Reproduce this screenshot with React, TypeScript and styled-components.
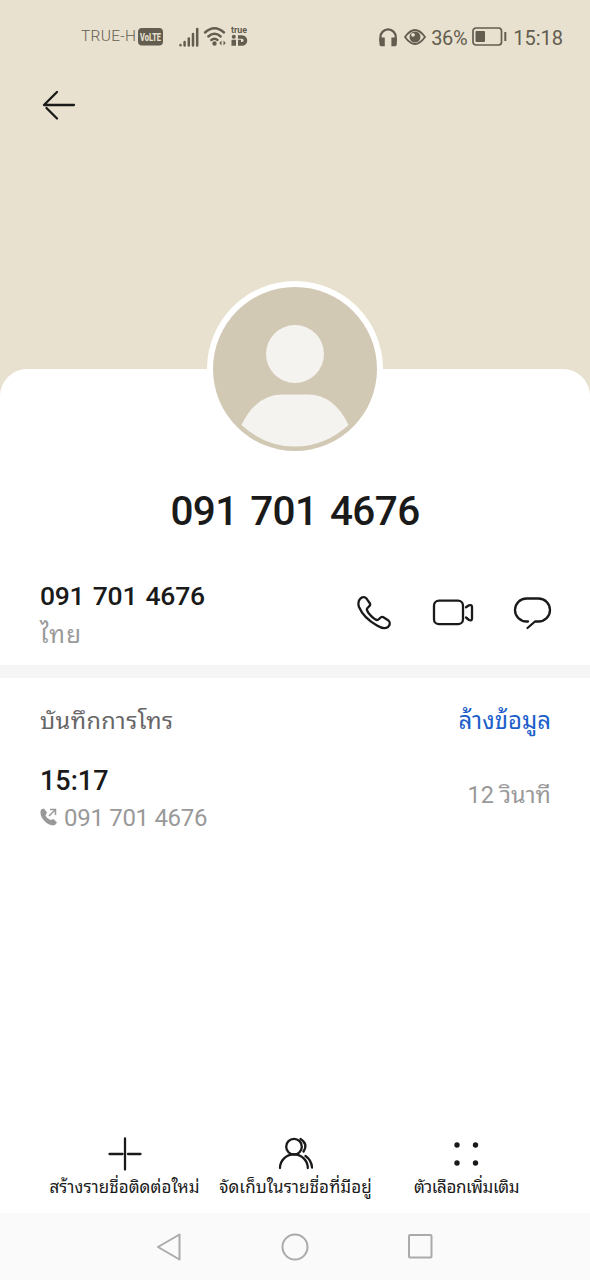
import React from 'react';
import styled, { createGlobalStyle } from 'styled-components';

const Global = createGlobalStyle`
  * { box-sizing: border-box; }
  body { margin: 0; background: #fff; }
  svg { display: block; flex: none; overflow: visible; }
`;

const Screen = styled.div`
  width: 590px;
  height: 1280px;
  display: flex;
  flex-direction: column;
  background: #fff;
  overflow: hidden;
  font-family: Roboto, 'Noto Sans Thai Looped', Loma, Waree, Garuda, 'Noto Sans Thai', 'Noto Sans', sans-serif;
  color: #1a1a1a;
`;

const Hero = styled.header`
  height: 399px;
  flex: none;
  background: #e8e1cf;
`;

const StatusBar = styled.div`
  height: 74px;
  padding: 0 27px 0 81px;
  display: flex;
  justify-content: space-between;
  align-items: center;
  color: #635d50;
`;

const StatusGroup = styled.div`
  display: flex;
  align-items: center;
`;

const BackButton = styled.div`
  padding: 16px 0 0 42px;
`;

const Sheet = styled.main`
  flex: 1;
  margin-top: -30px;
  background: #fff;
  border-radius: 27px 27px 0 0;
  display: flex;
  flex-direction: column;
`;

const Avatar = styled.div`
  width: 176px;
  height: 176px;
  margin: -88px auto 0;
  padding: 6px;
  border-radius: 50%;
  background: #fff;
`;

interface LabelProps {
  $size: number;
  $line: number;
  $weight?: number;
  $color?: string;
  $spacing?: number;
  $word?: number;
  $left?: number;
  $top?: number;
}

const Label = styled.span<LabelProps>`
  display: block;
  white-space: nowrap;
  margin: ${p => p.$top ?? 0}px 0 0 ${p => p.$left ?? 0}px;
  font-size: ${p => p.$size}px;
  line-height: ${p => p.$line}px;
  font-weight: ${p => p.$weight ?? 400};
  color: ${p => p.$color ?? 'inherit'};
  letter-spacing: ${p => p.$spacing ?? 0}px;
  word-spacing: ${p => p.$word ?? 0}px;
`;

const Glyph = styled.svg<{ $left: number }>`
  margin-left: ${p => p.$left}px;
`;

const Title = styled.h1`
  margin: 27px 0 0;
  height: 55px;
  display: flex;
  justify-content: center;
`;

const ContactRow = styled.section`
  height: 126px;
  padding: 39px 39px 0 40px;
  display: flex;
  justify-content: space-between;
`;

const Actions = styled.div`
  display: flex;
  align-items: flex-start;
  gap: 41px;
  padding-top: 18px;
`;

const Divider = styled.div`
  height: 13px;
  background: #f5f5f5;
`;

const Row = styled.div<{ $top: number }>`
  display: flex;
  justify-content: space-between;
  padding: ${p => p.$top}px 39px 0 40px;
`;

const Inline = styled.div`
  display: flex;
  align-items: center;
  gap: 6px;
`;

const Toolbar = styled.footer`
  margin-top: auto;
  height: 82px;
  padding-left: 39px;
  display: flex;
`;

const Tool = styled.div`
  width: 171px;
  display: flex;
  flex-direction: column;
  align-items: center;
  gap: 1px;
  padding-top: 6px;
`;

const NavBar = styled.nav`
  height: 67px;
  flex: none;
  background: #fafafa;
  padding: 0 157px;
  display: flex;
  align-items: center;
  justify-content: space-between;
`;

const ink = { fill: 'none', stroke: '#1a1a1a', strokeWidth: 2.3, strokeLinecap: 'round' as const, strokeLinejoin: 'round' as const };

export default function App() {
  return (
    <Screen>
      <Global />
      <Hero>
        <StatusBar>
          <StatusGroup>
            <Label $size={15.5} $line={20} $weight={300} $top={-2} $spacing={0.3}>TRUE-H</Label>
            <Glyph $left={2} width="26" height="18">
              <rect width="25" height="17.5" rx="4" fill="#635d50" />
              <text x="12.5" y="13" textAnchor="middle" textLength="21" lengthAdjust="spacingAndGlyphs" fontSize="11" fontWeight="800" fill="#e8e1cf">VoLTE</text>
            </Glyph>
            <Glyph $left={15} width="20" height="19" stroke="#635d50" strokeWidth="2.5" strokeLinecap="round">
              <path d="M1.5 17v.2M5.6 14v3.4M9.800 10.500v6.900M14 6v11.400M18.200 1v16.400" />
            </Glyph>
            <Glyph $left={5} width="23" height="20" fill="none" stroke="#635d50" strokeWidth="2.4" strokeLinecap="round">
              <path d="M1 5.500Q10.500-3 20 5.500M4.300 9.500Q10.500 4 16.700 9.500M7.300 13Q10.500 10.400 13.500 13" />
              <circle cx="10.500" cy="16.500" r="1" fill="#635d50" />
              <path d="M17.500 13.500l-2.200 2.500 2.200 2.500zM19.500 13.500l2.200 2.500-2.200 2.500z" fill="#635d50" stroke="none" />
            </Glyph>
            <Glyph $left={4} width="18" height="20" fill="#635d50">
              <text x="0" y="5.500" fontSize="8.500" fontWeight="700" textLength="16" lengthAdjust="spacingAndGlyphs">true</text>
              <circle cx="2.800" cy="9.700" r="2" />
              <path d="M.5 12.700h4.500v6h-4.500zM7 8.200h4a5.200 5.200 0 0 1 0 10.500H7v-6h3v2.300h1a1.500 1.500 0 0 0 0-3.300H7z" />
            </Glyph>
          </StatusGroup>
          <StatusGroup>
            <Glyph $left={0} width="19" height="19" fill="none" stroke="#635d50" strokeWidth="2.200">
              <path d="M1.500 14V9a7.600 7.600 0 0 1 15.200 0v5" />
              <path d="M1.500 10.500h3.200v6.700H3a1.500 1.500 0 0 1-1.500-1.500zM16.700 10.500h-3.200v6.700h1.700a1.500 1.500 0 0 0 1.500-1.500z" fill="#635d50" />
            </Glyph>
            <Glyph $left={6} width="22" height="16">
              <path d="M1 8Q11-6 21 8Q11 22 1 8z" fill="none" stroke="#635d50" strokeWidth="1.800" />
              <circle cx="11" cy="8" r="5.500" fill="#635d50" />
              <circle cx="9" cy="5.800" r="1.900" fill="#e8e1cf" />
            </Glyph>
            <Label $size={20} $line={22} $left={5} $top={2} $spacing={-0.4}>36%</Label>
            <Glyph $left={5} width="36" height="20">
              <rect x="1" y="1" width="28.500" height="17" rx="3" fill="none" stroke="#635d50" strokeWidth="1.700" />
              <rect x="3.500" y="4" width="9.500" height="11" rx="1" fill="#635d50" />
              <path d="M33.300 5v9" stroke="#635d50" strokeWidth="2" />
            </Glyph>
            <Label $size={20} $line={22} $left={5} $top={1}>15:18</Label>
          </StatusGroup>
        </StatusBar>
        <BackButton>
          <svg width="34" height="30" {...ink}><path d="M32 15H2L15 2M4.500 18L15 28.500" /></svg>
        </BackButton>
      </Hero>
      <Sheet>
        <Avatar>
          <svg width="164" height="164">
            <circle cx="82" cy="82" r="82" fill="#d2c9b4" />
            <circle cx="82" cy="67" r="29" fill="#f5f3f0" />
            <path d="M28.500 138Q43 107.500 69 107.500H95Q121 107.500 135.500 138Q112 159.500 82 159.500Q52 159.500 28.500 138z" fill="#f5f3f0" />
          </svg>
        </Avatar>
        <Title><Label $size={40.5} $line={54} $weight={500} $spacing={-0.6} $word={3}>091 701 4676</Label></Title>
        <ContactRow>
          <div>
            <Label $size={26.5} $line={36} $weight={500} $spacing={-0.25} $word={2}>091 701 4676</Label>
            <Label $size={24} $line={42} $color="#999" $spacing={1.2}>ไทย</Label>
          </div>
          <Actions>
            <svg width="34" height="34" {...ink}><path d="M3 3C5 .500 8 .500 9.700 2.800L13 7.500C14.500 10 9.800 11 9.800 13.500C10.500 17 17 23.500 20 24C22.500 24 23 20 26 21L31.500 24.500C33.500 26.500 33 29 31 31C28 33 24 32 20 29.500C12 25 5 18 2 11C1 8 1 5.500 3 3z" /></svg>
            <svg width="41" height="34" {...ink}><rect x="2" y="4.700" width="29" height="23.500" rx="5" /><path d="M34 11.300L37 9.300Q40 8.500 40 11V22.500Q40 25 37 24L34 21.500" /></svg>
            <svg width="37" height="34" {...ink}><path d="M14 25.500H12.500A11.500 11.500 0 0 1 12.500 2.500H24.500A11.500 11.500 0 0 1 24.500 25.500H21L13.500 32" /></svg>
          </Actions>
        </ContactRow>
        <Divider />
        <Row $top={25}>
          <Label $size={23.5} $line={36} $color="#666" $spacing={0.4}>บันทึกการโทร</Label>
          <Label $size={24} $line={36} $color="#1c5fcb">ล้างข้อมูล</Label>
        </Row>
        <Row $top={23}>
          <div>
            <Label $size={27} $line={38} $weight={500}>15:17</Label>
            <Inline>
              <svg width="18" height="20"><path d="M1 1.500L4 .5 7 4.500 5.500 7.500Q7 11 10.500 12L13.500 11 17 14.500 15 17C9 19-2 10 1 1.500z" fill="#999" /><path d="M9 8L15.500 1.500M10 1.500H15.500V7" fill="none" stroke="#999" strokeWidth="1.500" /></svg>
              <Label $size={24} $line={36} $color="#999" $spacing={-0.3}>091 701 4676</Label>
            </Inline>
          </div>
          <Label $size={23.5} $line={67} $color="#999">12 วินาที</Label>
        </Row>
        <Toolbar>
          <Tool>
            <svg width="34" height="34" {...ink}><path d="M17 1.500V32.500M1.500 17H14.500M20 17H32.500" /></svg>
            <Label $size={17} $line={30} $spacing={0.05}>สร้างรายชื่อติดต่อใหม่</Label>
          </Tool>
          <Tool>
            <svg width="33" height="34" {...ink}><circle cx="15" cy="9.700" r="7.800" /><path d="M1 31A13.900 13.600 0 0 1 28.800 31M21.500 2Q29.500 7 24.500 14.500M26.500 19Q32.500 23 33 30.500" /></svg>
            <Label $size={17} $line={30} $spacing={0.1}>จัดเก็บในรายชื่อที่มีอยู่</Label>
          </Tool>
          <Tool>
            <svg width="34" height="34" fill="#1a1a1a"><circle cx="7" cy="8" r="2.700" /><circle cx="25.500" cy="8" r="2.700" /><circle cx="7" cy="26" r="2.700" /><circle cx="25.500" cy="26" r="2.700" /></svg>
            <Label $size={17} $line={30} $spacing={-0.4}>ตัวเลือกเพิ่มเติม</Label>
          </Tool>
        </Toolbar>
      </Sheet>
      <NavBar>
        <svg width="24" height="28" fill="none" stroke="#aaa" strokeWidth="2" strokeLinejoin="round"><path d="M1 14L22.500 1.500V26.500z" /></svg>
        <svg width="28" height="28" fill="none" stroke="#aaa" strokeWidth="2"><circle cx="14" cy="14" r="12.500" /></svg>
        <svg width="25" height="25" fill="none" stroke="#aaa" strokeWidth="2"><rect x="1" y="1" width="22.500" height="22.500" rx="1" /></svg>
      </NavBar>
    </Screen>
  );
}
